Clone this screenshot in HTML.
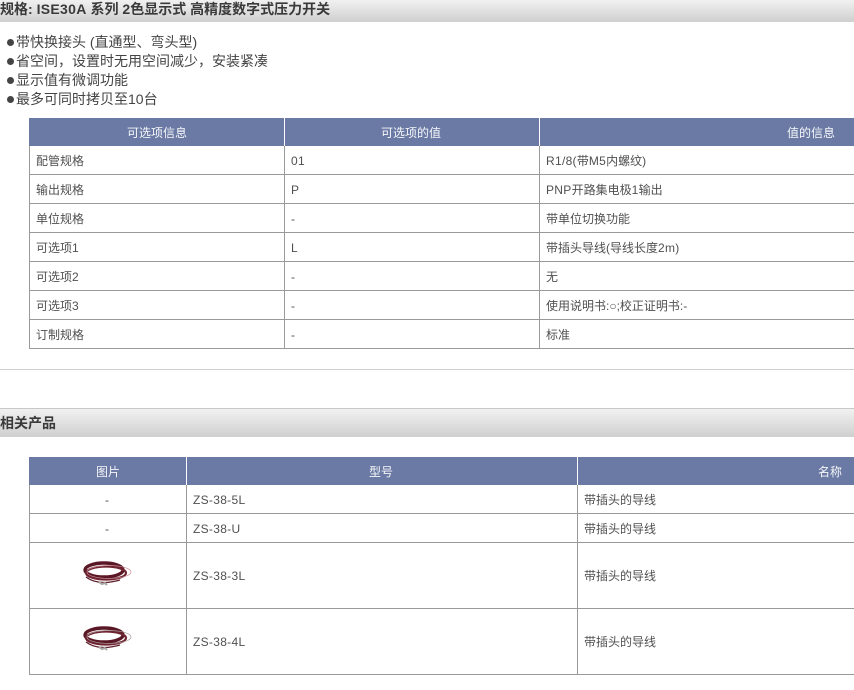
<!DOCTYPE html>
<html lang="zh">
<head>
<meta charset="utf-8">
<style>
html,body{margin:0;padding:0;background:#fff}
body{position:relative;width:854px;height:690px;overflow:hidden;font-family:"Liberation Sans","Noto Sans CJK SC",sans-serif;color:#444;filter:blur(.3px)}
.a{position:absolute;white-space:nowrap}
.bar{left:0;width:854px;background:linear-gradient(#f1f1f1,#cfcfcf)}
.ttl{left:0;font-size:14px;font-weight:bold;color:#3a3a3a}
.li{left:7px;font-size:14px;line-height:19px;color:#444}
.li i{display:inline-block;width:7px;height:7px;border-radius:50%;background:#444;margin:0 2px 0 0;vertical-align:1px}
.th{background:#6a7aa4}
.h{color:#f6f7fa;font-size:12px;line-height:16px}
.c{font-size:12px;line-height:16px;color:#505050}
.l{letter-spacing:.3px}
.ln{background:#9a9a9a}
.v{background:#9a9a9a;width:1px}
.w{background:#fff;width:1px}
</style>
</head>
<body>
<div class="a bar" style="top:0;height:22px"></div>
<div class="a ttl" style="top:0;line-height:18px">规格: <span style="letter-spacing:.3px">ISE30A</span> 系列 2色显示式 高精度数字式压力开关</div>

<div class="a li" style="top:33px"><i></i>带快换接头 (直通型、弯头型)</div>
<div class="a li" style="top:52px"><i></i>省空间，设置时无用空间减少，安装紧凑</div>
<div class="a li" style="top:71px"><i></i>显示值有微调功能</div>
<div class="a li" style="top:90px"><i></i>最多可同时拷贝至10台</div>

<div class="a th" style="left:29px;top:118px;width:825px;height:28px"></div>
<div class="a w" style="left:284px;top:118px;height:28px"></div>
<div class="a w" style="left:539px;top:118px;height:28px"></div>
<div class="a h" style="left:127px;top:125px">可选项信息</div>
<div class="a h" style="left:381px;top:125px">可选项的值</div>
<div class="a h" style="left:787px;top:125px">值的信息</div>

<div class="a v" style="left:29px;top:146px;height:203px"></div>
<div class="a v" style="left:284px;top:146px;height:203px"></div>
<div class="a v" style="left:539px;top:146px;height:203px"></div>
<div class="a ln" style="left:29px;top:174px;width:825px;height:1px"></div>
<div class="a ln" style="left:29px;top:203px;width:825px;height:1px"></div>
<div class="a ln" style="left:29px;top:232px;width:825px;height:1px"></div>
<div class="a ln" style="left:29px;top:261px;width:825px;height:1px"></div>
<div class="a ln" style="left:29px;top:290px;width:825px;height:1px"></div>
<div class="a ln" style="left:29px;top:319px;width:825px;height:1px"></div>
<div class="a ln" style="left:29px;top:348px;width:825px;height:1px"></div>

<div class="a c" style="left:36px;top:153px">配管规格</div>
<div class="a c l" style="left:291px;top:153px">01</div>
<div class="a c" style="left:546px;top:153px"><span class="l">R1/8(</span>带<span class="l">M5</span>内螺纹)</div>
<div class="a c" style="left:36px;top:182px">输出规格</div>
<div class="a c l" style="left:291px;top:182px">P</div>
<div class="a c" style="left:546px;top:182px"><span class="l">PNP</span>开路集电极<span class="l">1</span>输出</div>
<div class="a c" style="left:36px;top:211px">单位规格</div>
<div class="a c" style="left:291px;top:211px">-</div>
<div class="a c" style="left:546px;top:211px">带单位切换功能</div>
<div class="a c" style="left:36px;top:240px">可选项1</div>
<div class="a c l" style="left:291px;top:240px">L</div>
<div class="a c" style="left:546px;top:240px">带插头导线(导线长度<span class="l">2m</span>)</div>
<div class="a c" style="left:36px;top:269px">可选项2</div>
<div class="a c" style="left:291px;top:269px">-</div>
<div class="a c" style="left:546px;top:269px">无</div>
<div class="a c" style="left:36px;top:298px">可选项3</div>
<div class="a c" style="left:291px;top:298px">-</div>
<div class="a c" style="left:546px;top:298px">使用说明书:○;校正证明书:-</div>
<div class="a c" style="left:36px;top:327px">订制规格</div>
<div class="a c" style="left:291px;top:327px">-</div>
<div class="a c" style="left:546px;top:327px">标准</div>

<div class="a" style="left:0;top:369px;width:854px;height:1px;background:#cfcfcf"></div>

<div class="a bar" style="top:408px;height:29px;border-top:1px solid #c8c8c8;box-sizing:border-box"></div>
<div class="a ttl" style="top:414px;line-height:18px">相关产品</div>

<div class="a th" style="left:29px;top:457px;width:825px;height:28px"></div>
<div class="a w" style="left:186px;top:457px;height:28px"></div>
<div class="a w" style="left:577px;top:457px;height:28px"></div>
<div class="a h" style="left:96px;top:464px">图片</div>
<div class="a h" style="left:369px;top:464px">型号</div>
<div class="a h" style="left:818px;top:464px">名称</div>

<div class="a v" style="left:29px;top:485px;height:190px"></div>
<div class="a v" style="left:186px;top:485px;height:190px"></div>
<div class="a v" style="left:577px;top:485px;height:190px"></div>
<div class="a ln" style="left:29px;top:513px;width:825px;height:1px"></div>
<div class="a ln" style="left:29px;top:542px;width:825px;height:1px"></div>
<div class="a ln" style="left:29px;top:608px;width:825px;height:1px"></div>
<div class="a ln" style="left:29px;top:674px;width:825px;height:1px"></div>

<div class="a c" style="left:105px;top:492px">-</div>
<div class="a c l" style="left:193px;top:492px">ZS-38-5L</div>
<div class="a c" style="left:584px;top:492px">带插头的导线</div>
<div class="a c" style="left:105px;top:521px">-</div>
<div class="a c l" style="left:193px;top:521px">ZS-38-U</div>
<div class="a c" style="left:584px;top:521px">带插头的导线</div>
<div class="a c l" style="left:193px;top:568px">ZS-38-3L</div>
<div class="a c" style="left:584px;top:568px">带插头的导线</div>
<div class="a c l" style="left:193px;top:634px">ZS-38-4L</div>
<div class="a c" style="left:584px;top:634px">带插头的导线</div>

<svg class="a" style="left:80px;top:558px" width="56" height="32" viewBox="0 0 56 32" fill="none">
<ellipse cx="24" cy="12" rx="19" ry="7" stroke="#5a1826" stroke-width="3.4"/>
<ellipse cx="26" cy="15" rx="20" ry="6.5" stroke="#6f2432" stroke-width="2.2"/>
<ellipse cx="29" cy="14" rx="22" ry="6.5" stroke="#c98a94" stroke-width=".7"/>
<path d="M6 19c8 6 20 7 34 3" stroke="#5e1c2a" stroke-width="1.3"/>
<path d="M19 24l3 2 3-1 2 2" stroke="#a9a5a0" stroke-width="2"/>
</svg>
<svg class="a" style="left:80px;top:624px" width="56" height="32" viewBox="0 0 56 32" fill="none">
<ellipse cx="24" cy="11" rx="19" ry="7" stroke="#5a1826" stroke-width="3.4"/>
<ellipse cx="26" cy="14" rx="20" ry="6.5" stroke="#6f2432" stroke-width="2.2"/>
<ellipse cx="29" cy="13" rx="22" ry="6.5" stroke="#a89a98" stroke-width=".7"/>
<path d="M6 18c8 6 20 7 34 3" stroke="#5e1c2a" stroke-width="1.3"/>
<path d="M19 23l3 2 3-1 2 2" stroke="#a9a5a0" stroke-width="2"/>
</svg>
</body>
</html>
